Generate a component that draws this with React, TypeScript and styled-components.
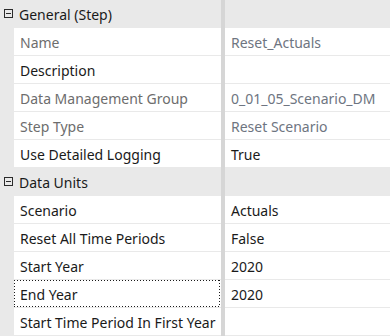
import React from 'react'
import styled, { createGlobalStyle, css } from 'styled-components'

const GlobalStyle = createGlobalStyle`
  html, body {
    margin: 0;
    padding: 0;
    background: #ffffff;
  }
  body {
    font-family: "Segoe UI", "Noto Sans", sans-serif;
    font-size: 14px;
    color: #1a1a1a;
  }
`;

const Grid = styled.div`
  width: 390px;
  height: 336px;
  overflow: hidden;
  display: flex;
  flex-direction: column;
  background: #ffffff;
`;

const RowWrapper = styled.div`
  display: flex;
  height: 28px;
  flex-shrink: 0;
`;

const CategoryWrapper = styled.div`
  display: flex;
  height: 28px;
  flex-shrink: 0;
  background: #e9e9e9;
`;

const Gutter = styled.div`
  width: 14px;
  flex-shrink: 0;
  background: #e9e9e9;
  display: flex;
  align-items: center;
  justify-content: center;
`;

const Splitter = styled.div`
  width: 4px;
  flex-shrink: 0;
  background: #d6d6d6;
`;

const ToggleBox = styled.span`
  width: 7px;
  height: 7px;
  border: 1px solid #2b2b2b;
  margin-left: 2px;
  margin-top: -1px;
  display: flex;
  align-items: center;
  justify-content: center;
  &::after {
    content: '';
    width: 5px;
    height: 1px;
    background: #2b2b2b;
  }
`;

const CategoryTitle = styled.div`
  width: 207px;
  flex-shrink: 0;
  box-sizing: border-box;
  padding-left: 5px;
  padding-top: 1px;
  display: flex;
  align-items: center;
  color: #1a1a1a;
  white-space: nowrap;
`;

const CategoryRest = styled.div`
  flex: 1;
`;

const focusRing = css`
  background-image:
    linear-gradient(to right, #1a1a1a 1px, transparent 1px),
    linear-gradient(to right, #1a1a1a 1px, transparent 1px),
    linear-gradient(to bottom, #1a1a1a 1px, transparent 1px),
    linear-gradient(to bottom, #1a1a1a 1px, transparent 1px);
  background-size: 3px 1px, 3px 1px, 1px 3px, 1px 3px;
  background-repeat: repeat-x, repeat-x, repeat-y, repeat-y;
  background-position: 0 0, 0 26px, 0 0, 205px 0;
`;

const LabelCell = styled.div<{ $readOnly?: boolean; $focused?: boolean }>`
  width: 207px;
  flex-shrink: 0;
  box-sizing: border-box;
  padding-left: 6px;
  padding-top: 2px;
  display: flex;
  align-items: center;
  white-space: nowrap;
  overflow: hidden;
  border-bottom: 1px solid #e9e9e9;
  color: ${p => (p.$readOnly ? '#6d6d6d' : '#1a1a1a')};
  ${p => p.$focused && focusRing}
`;

const ValueCell = styled.div<{ $readOnly?: boolean }>`
  flex: 1;
  box-sizing: border-box;
  padding-left: 6px;
  padding-top: 2px;
  display: flex;
  align-items: center;
  white-space: nowrap;
  overflow: hidden;
  border-bottom: 1px solid #e9e9e9;
  color: ${p => (p.$readOnly ? '#6e7581' : '#1a1a1a')};
`;

type Property = {
  label: string;
  value: string;
  readOnly?: boolean;
  focused?: boolean;
};

type Category = {
  title: string;
  items: Property[];
};

const categories: Category[] = [
  {
    title: 'General (Step)',
    items: [
      { label: 'Name', value: 'Reset_Actuals', readOnly: true },
      { label: 'Description', value: '' },
      { label: 'Data Management Group', value: '0_01_05_Scenario_DM', readOnly: true },
      { label: 'Step Type', value: 'Reset Scenario', readOnly: true },
      { label: 'Use Detailed Logging', value: 'True' },
    ],
  },
  {
    title: 'Data Units',
    items: [
      { label: 'Scenario', value: 'Actuals' },
      { label: 'Reset All Time Periods', value: 'False' },
      { label: 'Start Year', value: '2020' },
      { label: 'End Year', value: '2020', focused: true },
      { label: 'Start Time Period In First Year', value: '' },
    ],
  },
];

export default function App() {
  return (
    <Grid>
      <GlobalStyle />
      {categories.map(cat => (
        <React.Fragment key={cat.title}>
          <CategoryWrapper>
            <Gutter>
              <ToggleBox />
            </Gutter>
            <CategoryTitle>{cat.title}</CategoryTitle>
            <Splitter />
            <CategoryRest />
          </CategoryWrapper>
          {cat.items.map(item => (
            <RowWrapper key={item.label}>
              <Gutter />
              <LabelCell $readOnly={item.readOnly} $focused={item.focused}>
                {item.label}
              </LabelCell>
              <Splitter />
              <ValueCell $readOnly={item.readOnly}>{item.value}</ValueCell>
            </RowWrapper>
          ))}
        </React.Fragment>
      ))}
    </Grid>
  );
}
